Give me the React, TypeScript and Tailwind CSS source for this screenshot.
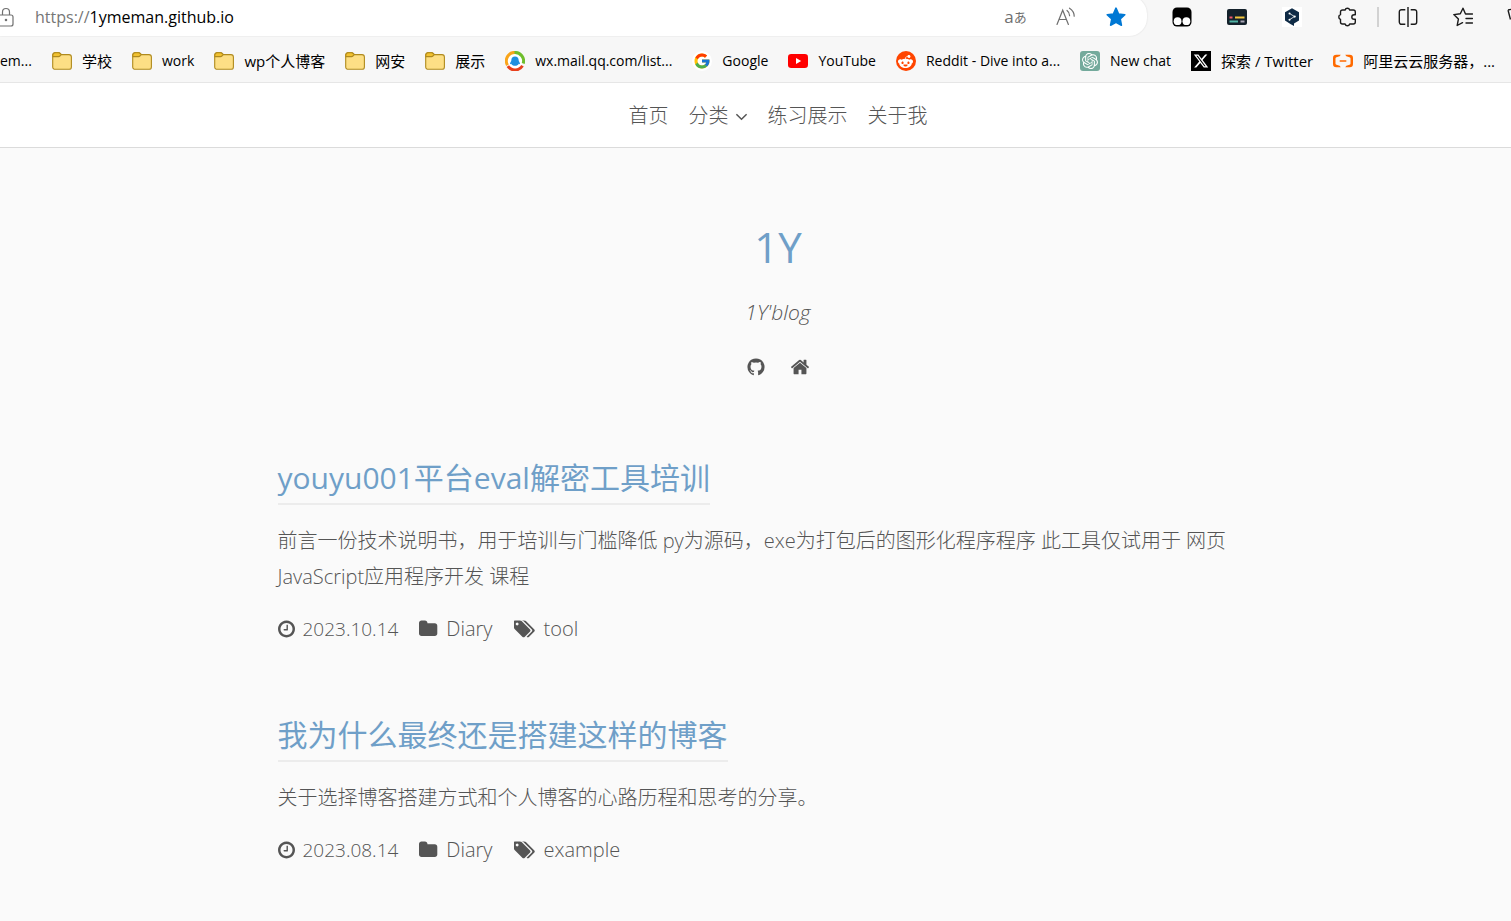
import type { ReactNode } from "react";
import { FcGoogle } from "react-icons/fc";
import { FaRedditAlien, FaXTwitter } from "react-icons/fa6";
import { SiAlibabacloud, SiOpenai } from "react-icons/si";

const GLYPHS = {
  github:
    "M896 128q209 0 385.5 103t279.5 279.5 103 385.5q0 251-146.5 451.5t-378.5 277.5q-27 5-40-7t-13-30q0-3 .5-76.5t.5-134.5q0-97-52-142 57-6 102.5-18t94-39 81-66.5 53-105 20.5-150.5q0-119-79-206 37-91-8-204-28-9-81 11t-92 44l-38 24q-93-26-192-26t-192 26q-16-11-42.5-27t-83.5-38.5-85-13.5q-45 113-8 204-79 87-79 206 0 85 20.5 150t52.5 105 80.5 67 94 39 102.5 18q-39 36-49 103-21 10-45 15t-57 5-65.5-21.5-55.5-62.5q-19-32-48.5-52t-49.5-24l-20-3q-21 0-29 4.5t-5 11.5 9 14 13 12l7 5q22 10 43.5 38t31.5 51l10 23q13 38 44 61.5t67 30 69.5 7 55.5-3.5l23-4q0 38 .5 88.5t.5 54.5q0 18-13 30t-40 7q-232-77-378.5-277.5t-146.5-451.5q0-209 103-385.5t279.5-279.5 385.5-103z",
  home: "M1472 992v480q0 26-19 45t-45 19h-384v-384h-256v384h-384q-26 0-45-19t-19-45v-480q0-1 .5-3t.5-3l575-474 575 474q1 2 1 6zm223-69l-62 74q-8 9-21 11h-3q-13 0-21-7l-692-577-692 577q-12 8-24 7-13-2-21-11l-62-74q-8-10-7-23.5t11-21.5l719-599q32-26 76-26t76 26l244 204v-195q0-14 9-23t23-9h192q14 0 23 9t9 23v408l219 182q10 8 11 21.5t-7 23.5z",
  clock:
    "M1024 544v448q0 14-9 23t-23 9h-320q-14 0-23-9t-9-23v-64q0-14 9-23t23-9h224v-352q0-14 9-23t23-9h64q14 0 23 9t9 23zm416 352q0-148-73-273t-198-198-273-73-273 73-198 198-73 273 73 273 198 198 273 73 273-73 198-198 73-273zm224 0q0 209-103 385.5t-279.5 279.5-385.5 103-385.5-103-279.5-279.5-103-385.5 103-385.5 279.5-279.5 385.5-103 385.5 103 279.5 279.5 103 385.5z",
  folder:
    "M1728 608v704q0 92-66 158t-158 66h-1216q-92 0-158-66t-66-158v-960q0-92 66-158t158-66h320q92 0 158 66t66 158v32h672q92 0 158 66t66 158z",
  tags: "M384 448q0-53-37.5-90.5t-90.5-37.5-90.5 37.5-37.5 90.5 37.5 90.5 90.5 37.5 90.5-37.5 37.5-90.5zm1067 576q0 53-37 90l-491 492q-39 37-91 37-53 0-90-37l-715-716q-38-37-64.5-101t-26.5-117v-416q0-52 38-90t90-38h416q53 0 117 26.5t102 64.5l715 714q37 39 37 91zm384 0q0 53-37 90l-491 492q-39 37-91 37-36 0-59-14t-53-45l470-470q37-37 37-90 0-52-37-91l-715-714q-38-38-102-64.5t-117-26.5h224q53 0 117 26.5t102 64.5l715 714q37 39 37 91z",
};

type Box = "0 0 1792 1792" | "128 0 1536 1792" | "64 0 1728 1792" | "0 0 1920 1792";

function Glyph({ name, box, className }: { name: keyof typeof GLYPHS; box: Box; className: string }) {
  return (
    <svg viewBox={box} className={className} fill="currentColor" aria-hidden="true">
      <path d={GLYPHS[name]} />
    </svg>
  );
}

function FolderIcon() {
  return (
    <svg viewBox="0 0 20 20" className="size-5" aria-hidden="true">
      <path
        d="M0.7 4.2A2.6 2.6 0 0 1 3.3 1.6H6.600a2 2 0 0 1 1.400.6L9.400 3.600H17a2.400 2.400 0 0 1 2.400 2.400v9.900a2.400 2.400 0 0 1-2.400 2.400H3.100A2.400 2.400 0 0 1 .7 15.900z"
        fill="#fddf85"
        stroke="#b08a1e"
        strokeWidth="1.1"
      />
      <path
        d="M.8 5.600V4.200A2.500 2.500 0 0 1 3.300 1.700h3.200a2 2 0 0 1 1.400.6L9.200 3.600 7.900 5a2 2 0 0 1-1.400.6z"
        fill="#f2c230"
        stroke="#b08a1e"
        strokeWidth="1.1"
      />
    </svg>
  );
}

function MailIcon() {
  return (
    <svg viewBox="0 0 20 20" className="size-5" aria-hidden="true">
      <circle cx="10" cy="10" r="8" fill="#fff" />
      <path d="M11 1.500A8.500 8.500 0 0 0 2.500 14.200" fill="none" stroke="#f9a51a" strokeWidth="3" />
      <path d="M9.500 1.500A8.500 8.500 0 0 1 18.200 12.500" fill="none" stroke="#6fbe2c" strokeWidth="3" />
      <path d="M2.800 15.200A8.800 8.800 0 0 0 17.500 14.800" fill="none" stroke="#e8401c" strokeWidth="3" />
      <path
        d="M10 5.500c2.300 0 3.700 1.700 3.700 3.900 0 .9 1.300 2 1.300 3.400 0 .6-.7.3-1.300-.1-.5 1.500-2 2-3.700 2s-3.200-.5-3.700-2c-.6.4-1.300.7-1.300.1 0-1.400 1.300-2.500 1.300-3.400 0-2.200 1.400-3.900 3.700-3.900z"
        fill="#1f8fe0"
      />
    </svg>
  );
}

function YouTubeIcon() {
  return (
    <svg viewBox="0 0 20 20" className="size-5" aria-hidden="true">
      <rect y="3" width="20" height="14" rx="3.200" fill="#f00" />
      <path d="M8 7v6l5.200-3z" fill="#fff" />
    </svg>
  );
}

const bookmarks: { label: string; icon: ReactNode; cjk?: boolean }[] = [
  { label: "学校", icon: <FolderIcon />, cjk: true },
  { label: "work", icon: <FolderIcon /> },
  { label: "wp个人博客", icon: <FolderIcon />, cjk: true },
  { label: "网安", icon: <FolderIcon />, cjk: true },
  { label: "展示", icon: <FolderIcon />, cjk: true },
  { label: "wx.mail.qq.com/list...", icon: <MailIcon /> },
  {
    label: "Google",
    icon: (
      <span className="flex size-5 items-center justify-center rounded-full bg-white">
        <FcGoogle className="size-[18px]" />
      </span>
    ),
  },
  { label: "YouTube", icon: <YouTubeIcon /> },
  {
    label: "Reddit - Dive into a...",
    icon: (
      <span className="flex size-5 items-center justify-center rounded-full bg-[#ff4500] text-white">
        <FaRedditAlien className="size-[15px]" />
      </span>
    ),
  },
  {
    label: "New chat",
    icon: (
      <span className="flex size-5 items-center justify-center rounded-[3px] bg-[#74aa9c] text-white">
        <SiOpenai className="size-4" />
      </span>
    ),
  },
  {
    label: "探索 / Twitter",
    cjk: true,
    icon: (
      <span className="flex size-5 items-center justify-center bg-black text-white">
        <FaXTwitter className="size-4" />
      </span>
    ),
  },
  { label: "阿里云云服务器，...", icon: <SiAlibabacloud className="size-5 text-[#ff6a00]" />, cjk: true },
];

function AddressBar() {
  return (
    <div className="flex h-[37px] items-start overflow-hidden">
      <div className="-mt-1 flex h-10 w-[1147px] shrink-0 items-center rounded-r-[18px] bg-white pt-0.5 shadow-[0_0_2px_rgba(0,0,0,0.12)]">
        <svg viewBox="0 0 14 20" className="h-5 w-3.5 shrink-0" fill="none" stroke="#707070" strokeWidth="1.200" aria-hidden="true">
          <rect x="-2" y="8" width="15" height="11" rx="2" />
          <path d="M2.500 8V5a3.500 3.500 0 0 1 7 0v3" />
          <circle cx="6" cy="13" r=".7" fill="#555" />
        </svg>
        <p className="ml-[21px] flex-1 text-base text-black">
          <span className="text-[#767676]">https://</span>1ymeman.github.io
        </p>
        <div className="flex items-center gap-[30px] pr-[21px]">
          <button aria-label="Translate" className="flex w-[21px] items-center justify-center text-[#707070]">
            <span className="text-[17px] leading-5">a</span>
            <span className="text-[13px] leading-5">あ</span>
          </button>
          <button aria-label="Read aloud">
            <svg viewBox="0 0 20 20" className="size-5" fill="none" stroke="#707070" strokeWidth="1.200" strokeLinecap="round" aria-hidden="true">
              <path d="M1 17.500 6.700 3.200 12.400 17.500M3 12.500h7.400" />
              <path d="M11 3.500c1.700 1.200 2.600 3 2.600 5.200M13.500 1.200c2.900 1.900 4.700 4.500 4.700 8" />
            </svg>
          </button>
          <button aria-label="Favorite">
            <svg viewBox="0 0 20 20" className="size-5" aria-hidden="true">
              <path
                d="M10 1.200 12.600 7l6.200.7-4.600 4.300 1.200 6.200L10 15.200 4.600 18.200 5.800 12 1.200 7.700 7.400 7z"
                fill="#0078d4"
                stroke="#0078d4"
                strokeWidth="1.600"
                strokeLinejoin="round"
              />
            </svg>
          </button>
        </div>
      </div>
      <div className="flex h-[34px] shrink-0 items-center pl-[25px]">
        <button aria-label="Tampermonkey">
          <svg viewBox="0 0 20 20" className="size-5" aria-hidden="true">
            <rect x=".5" y=".5" width="19" height="19" rx="4.500" fill="#000" />
            <circle cx="5.600" cy="14.200" r="3.900" fill="#fff" />
            <circle cx="14.400" cy="14.200" r="3.900" fill="#fff" />
          </svg>
        </button>
        <button aria-label="Subtitles" className="ml-[35px]">
          <svg viewBox="0 0 20 20" className="size-5" aria-hidden="true">
            <rect y="2" width="20" height="16" rx="2" fill="#14212b" />
            <path d="M2.500 10.500h3" stroke="#f05a6c" strokeWidth="2" />
            <path d="M8 10.500h9.500" stroke="#f3c63f" strokeWidth="2" />
            <path d="M2.500 14.500h8.500" stroke="#4fb3a5" strokeWidth="2" />
            <path d="M13.500 14.500h4" stroke="#a9a5b5" strokeWidth="2" />
          </svg>
        </button>
        <button aria-label="DeepL" className="ml-[35px] bg-white">
          <svg viewBox="0 0 20 20" className="size-5" aria-hidden="true">
            <path d="M10 1.200 17 5.200v8.200l-5 3v2.700l-3.200-1.900L3 13.400V5.200z" fill="#0f2b46" />
            <path d="M7.500 6.500 12.500 9.500 7.500 12.700" fill="none" stroke="#fff" strokeWidth=".8" />
            <circle cx="7.500" cy="6.500" r="1" fill="#fff" />
            <circle cx="12.700" cy="9.600" r="1.100" fill="#fff" />
            <circle cx="7.500" cy="12.700" r="1" fill="#fff" />
          </svg>
        </button>
        <button aria-label="Extensions" className="ml-[35px]">
          <svg viewBox="0 0 20 20" className="size-5" fill="none" stroke="#1b1b1b" strokeWidth="1.400" strokeLinejoin="round" aria-hidden="true">
            <path d="M8.100 3a2.400 2.400 0 0 1 4.600 0h3.600a2 2 0 0 1 2 2v2.700h-1.200a2.300 2.300 0 0 0 0 4.600h1.200V15a2 2 0 0 1-2 2h-3.600a2.400 2.400 0 0 1-4.600 0H5.500a2 2 0 0 1-2-2v-2.700a2.400 2.400 0 0 1 0-4.600V5a2 2 0 0 1 2-2z" />
          </svg>
        </button>
        <span className="ml-5 h-5 w-0.5 bg-[#d2d2d2]" />
        <button aria-label="Split screen" className="ml-[19px]">
          <svg viewBox="0 0 20 20" className="size-5" fill="none" stroke="#1b1b1b" strokeWidth="1.400" aria-hidden="true">
            <path d="M7.300 2.700H3.500a2.200 2.200 0 0 0-2.200 2.200v10.200a2.200 2.200 0 0 0 2.200 2.200h3.800M12.700 2.700h3.800a2.200 2.200 0 0 1 2.200 2.200v10.200a2.200 2.200 0 0 1-2.200 2.200h-3.800M10 0v20" />
          </svg>
        </button>
        <button aria-label="Favorites list" className="ml-[35px]">
          <svg viewBox="0 0 20 20" className="size-5" fill="none" stroke="#1b1b1b" strokeWidth="1.400" strokeLinejoin="round" strokeLinecap="round" aria-hidden="true">
            <path d="M19.500 7H12.500L10 1.200 7.300 6.700.8 7.600l4.600 4.500-1.200 6.400 5.300-2.800M13 11.500h6.500M13 16h6.500" />
          </svg>
        </button>
        <button aria-label="Collections" className="ml-[34px]">
          <svg viewBox="0 0 20 20" className="size-5" fill="none" stroke="#1b1b1b" strokeWidth="1.400" aria-hidden="true">
            <path d="M1 3 3.500 12.500M1 3 8 1.500" />
          </svg>
        </button>
      </div>
    </div>
  );
}

function BookmarksBar() {
  return (
    <nav aria-label="Bookmarks" className="flex h-[46px] items-center gap-5 overflow-hidden border-b border-[#e6e6e6] pt-[3px] text-sm whitespace-nowrap text-black">
      <a href="#" className="w-8 shrink-0">em...</a>
      {bookmarks.map((b) => (
        <a key={b.label} href="#" className="flex shrink-0 items-center gap-2.5">
          {b.icon}
          <span className={b.cjk ? "text-[15px] leading-5" : "text-sm"}>{b.label}</span>
        </a>
      ))}
    </nav>
  );
}

interface Post {
  title: string;
  excerpt: string;
  date: string;
  category: string;
  tag: string;
}

const posts: Post[] = [
  {
    title: "youyu001平台eval解密工具培训",
    excerpt: "前言一份技术说明书，用于培训与门槛降低 py为源码，exe为打包后的图形化程序程序 此工具仅试用于 网页JavaScript应用程序开发 课程",
    date: "2023.10.14",
    category: "Diary",
    tag: "tool",
  },
  {
    title: "我为什么最终还是搭建这样的博客",
    excerpt: "关于选择博客搭建方式和个人博客的心路历程和思考的分享。",
    date: "2023.08.14",
    category: "Diary",
    tag: "example",
  },
];

function PostEntry({ post }: { post: Post }) {
  return (
    <article>
      <h2 className="flex text-[30px] leading-[48px] font-normal">
        <a href="#" className="border-b-2 border-[#ececec] pb-px text-[#6f9fc8]">
          {post.title}
        </a>
      </h2>
      <p className="mt-[18px] text-xl leading-9">{post.excerpt}</p>
      <div className="mt-4 flex items-center gap-[21px] text-xl leading-9">
        <span className="flex items-center gap-2">
          <Glyph name="clock" box="128 0 1536 1792" className="h-5 w-[17px]" />
          <time className="text-[19px]">{post.date}</time>
        </span>
        <a href="#" className="flex items-center gap-2">
          <Glyph name="folder" box="64 0 1728 1792" className="h-5 w-[19px]" />
          {post.category}
        </a>
        <a href="#" className="flex items-center gap-2">
          <Glyph name="tags" box="0 0 1920 1792" className="h-5 w-[22px]" />
          {post.tag}
        </a>
      </div>
    </article>
  );
}

export default function App() {
  return (
    <div className="min-h-screen overflow-x-hidden bg-[#fafafa] font-['Open_Sans','Noto_Sans_CJK_SC',sans-serif]">
      <header className="bg-[#f7f7f7]">
        <AddressBar />
        <BookmarksBar />
      </header>
      <div className="font-light text-[#555]">
        <nav aria-label="Site" className="flex h-[65px] items-center justify-center gap-5 border-b border-[#dbdbdb] bg-white pt-0.5 pl-[45px] text-xl">
          <a href="#">首页</a>
          <a href="#" className="flex items-center gap-1.5">
            分类
            <svg viewBox="0 0 14 14" className="size-[13px]" fill="none" stroke="currentColor" strokeWidth="1.600" aria-hidden="true">
              <path d="M1.500 4.500 7 10l5.500-5.500" />
            </svg>
          </a>
          <a href="#">练习展示</a>
          <a href="#">关于我</a>
        </nav>
        <main className="pl-[45px]">
          <section className="flex flex-col items-center pt-[67px]">
            <h1 className="text-[42px] leading-[64px] font-normal text-[#6f9fc8]">1Y</h1>
            <p className="mt-[15px] text-[21px] leading-9 italic">1Y'blog</p>
            <div className="mt-[27px] flex gap-6">
              <a href="#" aria-label="GitHub">
                <Glyph name="github" box="0 0 1792 1792" className="size-5" />
              </a>
              <a href="#" aria-label="Home">
                <Glyph name="home" box="0 0 1792 1792" className="size-5" />
              </a>
            </div>
          </section>
          <div className="mx-auto mt-[77px] flex max-w-[1001px] flex-col gap-16 pb-12">
            {posts.map((p) => (
              <PostEntry key={p.title} post={p} />
            ))}
          </div>
        </main>
      </div>
    </div>
  );
}
